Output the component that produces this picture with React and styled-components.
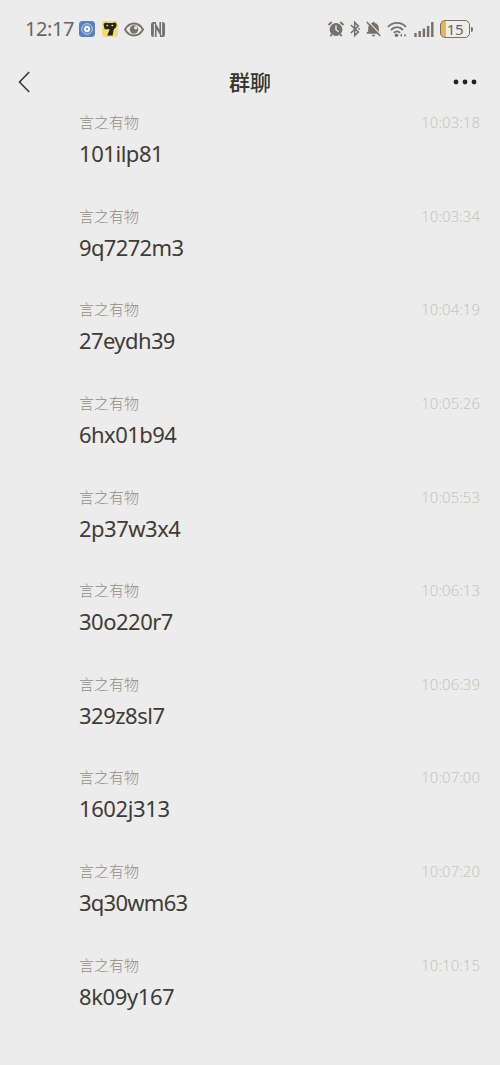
import React from "react";
import styled, { createGlobalStyle } from "styled-components";

const GlobalStyle = createGlobalStyle`
  body {
    margin: 0;
    background: #ececec;
    font-family: "Noto Sans", "Noto Sans CJK SC", sans-serif;
  }
`;

const Screen = styled.main`
  width: 500px;
  height: 1065px;
  overflow: hidden;
  background: #ececec;
`;

const StatusBar = styled.header`
  display: flex;
  justify-content: space-between;
  align-items: center;
  height: 58px;
  padding: 0 27px 0 25px;
  box-sizing: border-box;
  color: #6b665e;
`;

const StatusGroup = styled.div`
  display: flex;
  align-items: center;
`;

const Clock = styled.span`
  width: 54px;
  font-size: 20px;
  line-height: 24px;
  letter-spacing: -0.4px;
`;

const Glyph = styled.svg`
  display: block;
  flex: none;
  overflow: visible;
  margin-right: ${({ $gap = 0 }) => $gap}px;
`;

const Battery = styled.div`
  display: flex;
  align-items: center;
`;

const BatteryCell = styled.div`
  display: flex;
  align-items: center;
  justify-content: center;
  width: 30px;
  height: 18px;
  box-sizing: border-box;
  border: 1.5px solid #77716a;
  border-radius: 5px;
  background: linear-gradient(to right, #dfb765 5px, #f1eeea 5px);
  font-size: 15px;
  line-height: 15px;
  letter-spacing: -0.4px;
`;

const BatteryTip = styled.i`
  width: 2px;
  height: 5px;
  margin-left: 1px;
  border-radius: 0 2px 2px 0;
  background: #77716a;
`;

const TitleBar = styled.nav`
  display: grid;
  grid-template-columns: 60px 1fr 60px;
  align-items: center;
  height: 48px;
`;

const Title = styled.h1`
  margin: 0;
  padding-bottom: 2px;
  text-align: center;
  font: 500 21px/30px "Noto Sans CJK SC", sans-serif;
  color: #37332e;
`;

const BarButton = styled.button`
  display: flex;
  justify-content: ${({ $end }) => ($end ? "flex-end" : "flex-start")};
  padding: ${({ $end }) => ($end ? "0 23px 0 0" : "0 0 0 18px")};
  border: 0;
  background: none;
`;

const MessageList = styled.ul`
  margin: 0;
  padding: 0 20px 0 79px;
  list-style: none;
`;

const Message = styled.li`
  height: 93.65px;
`;

const Meta = styled.div`
  display: flex;
  justify-content: space-between;
  height: 32px;
`;

const Sender = styled.span`
  font-family: "Noto Sans CJK SC", sans-serif;
  font-size: 15px;
  line-height: 31px;
  font-weight: 300;
  color: #958e82;
`;

const Time = styled.time`
  font-size: 15px;
  line-height: 33px;
  font-weight: 300;
  color: #c8c4b9;
`;

const Content = styled.p`
  margin: 0;
  font-size: 22px;
  line-height: 30px;
  letter-spacing: ${({ $tracking }) => $tracking}px;
  color: #3f3b35;
`;

const messages = [
  ["101ilp81", "10:03:18", -0.45],
  ["9q7272m3", "10:03:34", -0.65],
  ["27eydh39", "10:04:19", -0.6],
  ["6hx01b94", "10:05:26", -0.55],
  ["2p37w3x4", "10:05:53", -0.5],
  ["30o220r7", "10:06:13", -0.5],
  ["329z8sl7", "10:06:39", -0.5],
  ["1602j313", "10:07:00", -0.4],
  ["3q30wm63", "10:07:20", -0.75],
  ["8k09y167", "10:10:15", -0.4],
];

const ink = "#77716a";

export default function App() {
  return (
    <Screen>
      <GlobalStyle />
      <StatusBar>
        <StatusGroup>
          <Clock>12:17</Clock>
          <Glyph $gap={7} width="16" height="16" viewBox="0 0 16 16">
            <rect width="16" height="16" rx="3.5" fill="#597fbd" />
            <circle cx="8" cy="8" r="5.3" fill="none" stroke="#c3d5ef" strokeWidth="1" />
            <path d="M6.2 4.8h3.6L11.5 8l-1.7 3.2H6.2L4.5 8z" fill="#eef4ff" />
            <circle cx="8" cy="8" r="1" fill="#597fbd" />
          </Glyph>
          <Glyph $gap={6} width="16" height="16" viewBox="0 0 16 16">
            <rect width="16" height="16" rx="3" fill="#f1dc75" />
            <path d="M1.5 3 3.5 1.5 5 2h6l2-.8 1.6 1.8-.4 3-2.4 2.2-1.2 6.3H5.2l2.6-6.3H2.6z" fill="#28231d" />
            <path d="m4.5 4.3 1.6.4M9.5 4.7l1.6-.4" stroke="#f5ead0" strokeWidth="1.2" />
          </Glyph>
          <Glyph $gap={7} width="20" height="15" viewBox="0 0 20 15" fill="none">
            <path d="M1 7.5C5.5-.5 14.5-.5 19 7.5 14.5 15.5 5.5 15.5 1 7.5Z" stroke={ink} strokeWidth="1.9" />
            <circle cx="10" cy="7.5" r="4.2" fill={ink} />
            <circle cx="11.7" cy="5.8" r="1.6" fill="#ececec" />
          </Glyph>
          <Glyph width="14" height="15" viewBox="0 0 14 15">
            <rect width="14" height="15" rx="2.5" fill={ink} />
            <path d="M3.4 15V1.8M10.6 0v13.2" stroke="#ececec" strokeWidth="1.1" />
            <path d="M5.6 15V7.2L8.9 13v2ZM8.4 0v7.8L5.1 2V0Z" fill="#ececec" />
          </Glyph>
        </StatusGroup>
        <StatusGroup>
          <Glyph $gap={6} width="16" height="16" viewBox="0 0 16 16" fill="none">
            <circle cx="8" cy="8.5" r="6.4" fill={ink} />
            <path d="m.5 4 3.2-3M15.5 4l-3.2-3M3.8 13.2l-1.4 2M12.2 13.2l1.4 2" stroke={ink} strokeWidth="1.8" />
            <path d="M8 4.5v4.2l2.6 2" stroke="#ececec" strokeWidth="1.4" />
          </Glyph>
          <Glyph $gap={6} width="10" height="16" viewBox="0 0 10 16" fill="none">
            <path d="m.8 4 7.5 7-3.6 3.5v-13L8.3 5 .8 12" stroke={ink} strokeWidth="1.6" />
            <circle cx="9" cy="8" r=".9" fill={ink} />
          </Glyph>
          <Glyph $gap={6} width="15" height="16" viewBox="0 0 15 16">
            <path d="M7.5.7a1.2 1.2 0 0 1 1.2 1.2C11.2 2.4 12.8 4.3 12.8 6.8v4l1.5 2H.7v-1.3l1.5-1.2V6.8c0-2.5 1.6-4.4 4.1-4.9A1.2 1.2 0 0 1 7.5.7ZM5.8 13.7h3.4a1.7 1.7 0 0 1-3.4 0Z" fill={ink} />
            <path d="m1.9.1 13 14" stroke="#ececec" strokeWidth="1.3" />
            <path d="m.8 1 13.4 14" stroke={ink} strokeWidth="1.5" />
          </Glyph>
          <Glyph $gap={7} width="20" height="16" viewBox="0 0 20 16" fill="none">
            <path d="M1 5.8c5-5.3 13-5.3 18 0M4 9c3.5-3.8 8.5-3.8 12 0M6.8 11.8c1.8-1.8 4.6-1.8 6.4 0" stroke={ink} strokeWidth="1.9" />
            <circle cx="9.5" cy="14.2" r="1.8" fill={ink} />
            <path d="m13 14.3 2-1.7v3.4zM19.4 14.3l-2-1.7v3.4z" fill={ink} />
          </Glyph>
          <Glyph $gap={6} width="20" height="15" viewBox="0 0 20 15">
            <path d="M1.5 15v-4M5.7 15V9M9.9 15V6.5M14.1 15V4M18.3 15V0" stroke={ink} strokeWidth="2.4" />
          </Glyph>
          <Battery>
            <BatteryCell>15</BatteryCell>
            <BatteryTip />
          </Battery>
        </StatusGroup>
      </StatusBar>
      <TitleBar>
        <BarButton aria-label="返回">
          <Glyph width="12" height="22" viewBox="0 0 12 22">
            <path d="M11.2 1 1.5 11l9.7 10" fill="none" stroke="#3c3934" strokeWidth="1.6" />
          </Glyph>
        </BarButton>
        <Title>群聊</Title>
        <BarButton $end aria-label="更多">
          <Glyph width="24" height="6" viewBox="0 0 24 6" fill="#26231f">
            <circle cx="3" cy="3" r="2.4" />
            <circle cx="12" cy="3" r="2.4" />
            <circle cx="21" cy="3" r="2.4" />
          </Glyph>
        </BarButton>
      </TitleBar>
      <MessageList>
        {messages.map(([text, time, tracking]) => (
          <Message key={time}>
            <Meta>
              <Sender>言之有物</Sender>
              <Time>{time}</Time>
            </Meta>
            <Content $tracking={tracking}>{text}</Content>
          </Message>
        ))}
      </MessageList>
    </Screen>
  );
}
